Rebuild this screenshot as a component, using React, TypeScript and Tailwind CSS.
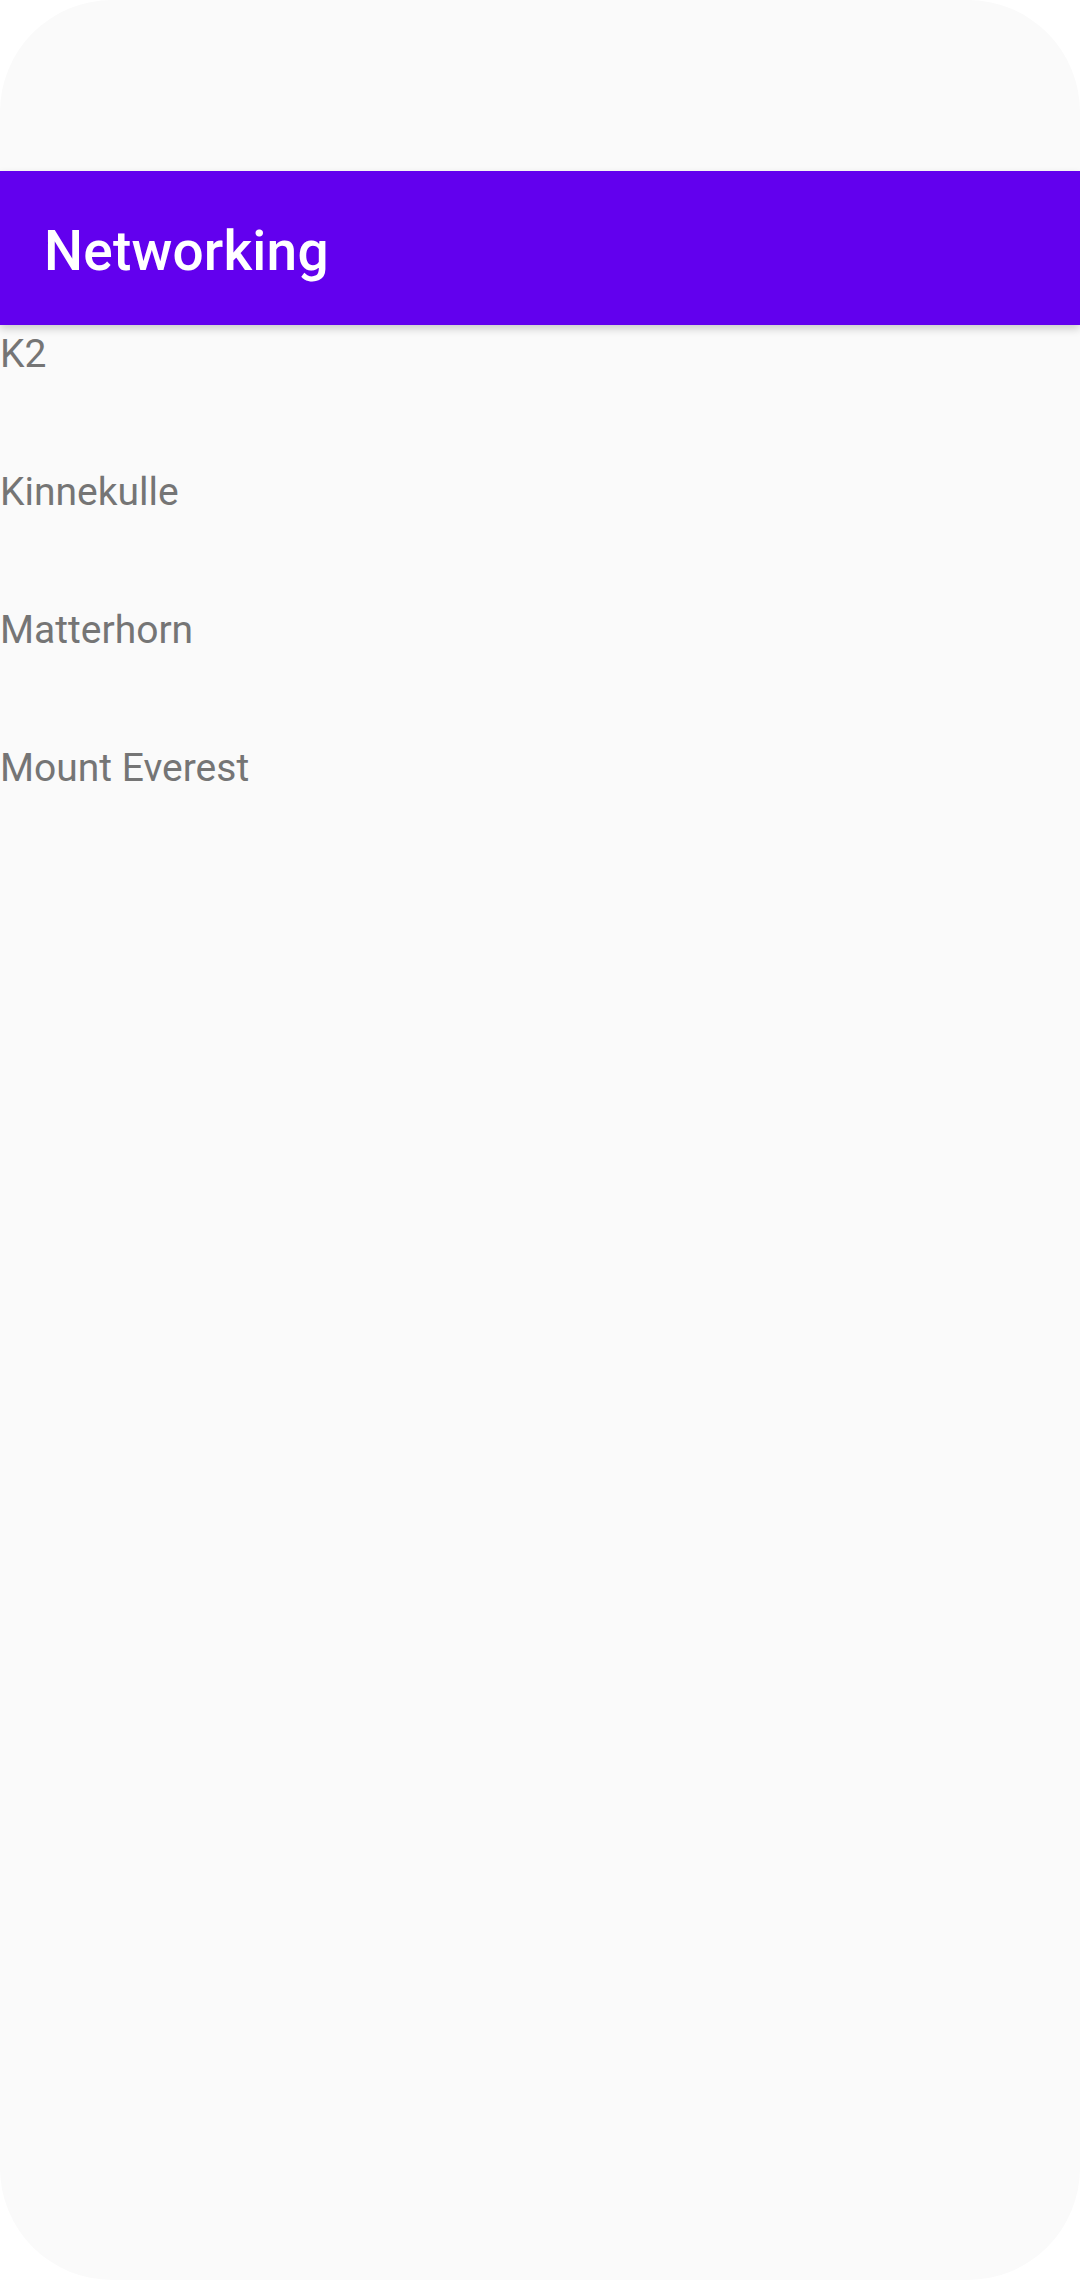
import React from "react";

const MOUNTAINS = ["K2", "Kinnekulle", "Matterhorn", "Mount Everest"];

export default function App() {
  return (
    <div className="w-[1080px] h-[2280px] bg-white" style={{ fontFamily: "Roboto, 'Noto Sans', sans-serif" }}>
      <div className="w-full h-full bg-[#fafafa] rounded-[112px] overflow-hidden flex flex-col">
        {/* status bar space */}
        <div className="h-[171px] shrink-0" />

        {/* App bar */}
        <div className="h-[154px] shrink-0 bg-[#6200ee] flex items-center px-[44px] pt-[6px] shadow-[0_4px_8px_rgba(0,0,0,0.18)] relative z-10">
          <h1 className="text-[55px] font-medium text-white leading-none tracking-[0.2px]">Networking</h1>
        </div>

        {/* List */}
        <div className="flex flex-col">
          {MOUNTAINS.map((name) => (
            <div key={name} className="h-[138px] text-[39px] leading-[46px] pt-[6px] text-[#757575]">
              {name}
            </div>
          ))}
        </div>
      </div>
    </div>
  );
}
